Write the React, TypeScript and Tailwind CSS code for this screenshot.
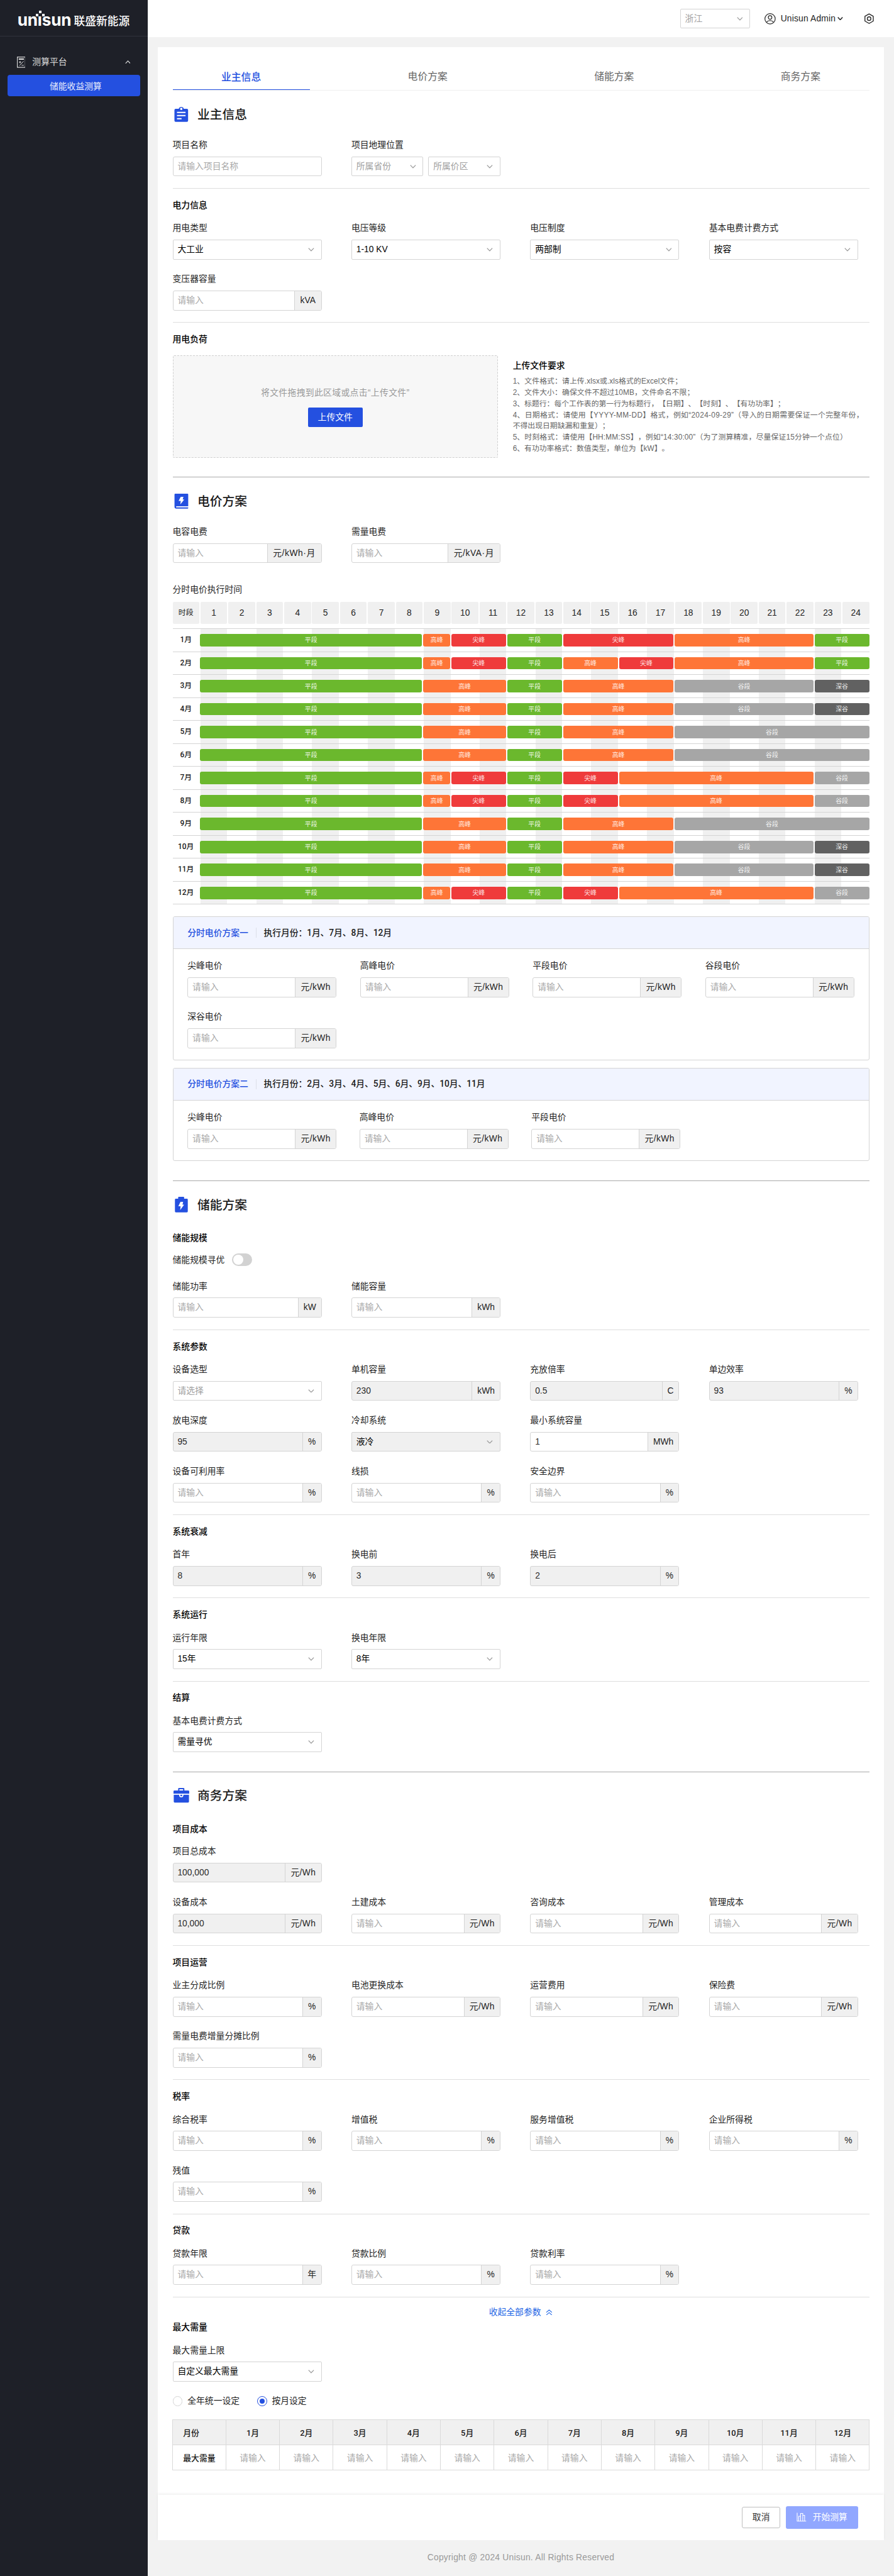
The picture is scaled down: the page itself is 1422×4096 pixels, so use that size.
import React from 'react';

type FieldSpec = {
  label: string;
  value?: string;
  placeholder?: string;
  unit?: string;
  select?: boolean;
  disabled?: boolean;
};

const UNIT_WIDTH: Record<string, string> = {
  'kVA': 'w-[43px]',
  '元/kWh·月': 'w-[87px] tracking-[0.6px]',
  '元/kVA·月': 'w-[84px] tracking-[0.6px]',
  '元/kWh': 'w-[66px] tracking-[0.4px]',
  '元/Wh': 'w-[58px] tracking-[0.4px]',
  'kW': 'w-[37px]',
  'kWh': 'w-[45px]',
  'MWh': 'w-[50px]',
  '%': 'w-[30px]',
  'C': 'w-[27px]',
  '年': 'w-[30px]',
};

function Chevron({ className = 'text-[#999]', up = false, size = 'w-[10px] h-[6px]', width = 1.3 }: { className?: string; up?: boolean; size?: string; width?: number }) {
  return (
    <svg viewBox="0 0 10 6" className={`shrink-0 ${size} ${className}`} fill="none" stroke="currentColor" strokeWidth={width}>
      <path d={up ? 'M0.8 5.4 L5 1 L9.2 5.4' : 'M0.8 0.6 L5 5 L9.2 0.6'} />
    </svg>
  );
}

function SelectBox({ value, placeholder, disabled, className = 'w-[240px]' }: { value?: string; placeholder?: string; disabled?: boolean; className?: string }) {
  return (
    <div className={`flex h-8 items-center justify-between rounded-[2px] border border-[#d4d4d4] pl-[7px] pr-[11px] ${disabled ? 'bg-[#f0f0f0]' : 'bg-white'} ${className}`}>
      <span className={value ? 'text-black' : 'text-[#a0a0a0]'}>{value ?? placeholder}</span>
      <Chevron />
    </div>
  );
}

function InputBox({ value, placeholder = '请输入', unit, disabled }: Omit<FieldSpec, 'label'>) {
  return (
    <div className={`flex h-8 w-[240px] overflow-hidden rounded-[3px] border border-[#d4d4d4] ${disabled ? 'bg-[#f0f0f0]' : 'bg-white'}`}>
      <div className={`flex flex-1 items-center pl-[7px] ${value ? 'text-[#2b2b2b]' : 'text-[#a8a8a8]'}`}>{value ?? placeholder}</div>
      {unit && (
        <div className={`flex shrink-0 items-center justify-center whitespace-nowrap border-l border-[#d4d4d4] bg-[#f0f0f0] text-[#222] ${UNIT_WIDTH[unit]}`}>{unit}</div>
      )}
    </div>
  );
}

function Field(f: FieldSpec) {
  return (
    <div className="w-[240px]">
      <div className="mb-2 h-[22px] pt-px leading-[22px] text-[#1f1f1f]">{f.label}</div>
      {f.select ? <SelectBox value={f.value} placeholder={f.placeholder} disabled={f.disabled} /> : <InputBox {...f} />}
    </div>
  );
}

function Fields({ items, className = 'mt-[15px]', gap = 'gap-x-12' }: { items: FieldSpec[]; className?: string; gap?: string }) {
  return (
    <div className={`flex flex-wrap gap-y-5 ${gap} ${className}`}>
      {items.map((f) => (
        <Field key={f.label} {...f} />
      ))}
    </div>
  );
}

const Divider = () => <div className="mt-[19px] h-px bg-[#dedede]" />;
const HeavyDivider = () => <div className="mt-[31px] h-px bg-[#a9a9a9]" />;

function SubTitle({ children, className = 'mt-[15px]' }: { children: React.ReactNode; className?: string }) {
  return <div className={`h-[22px] pt-px font-medium leading-[22px] text-black ${className}`}>{children}</div>;
}

function SectionTitle({ icon, children }: { icon: React.ReactNode; children: React.ReactNode }) {
  return (
    <div className="mt-6 flex h-7 gap-3">
      {icon}
      <h2 className="pt-px text-[20px] font-medium leading-7 text-[#1a1a1a]">{children}</h2>
    </div>
  );
}

const ClipboardIcon = () => (
  <svg viewBox="0 0 28 28" className="h-7 w-7 fill-[#2450e0]">
    <path fillRule="evenodd" d="M4.5 5h5a4.2 4.2 0 0 1 8 0h5a2 2 0 0 1 2 2v17a2 2 0 0 1-2 2h-18a2 2 0 0 1-2-2V7a2 2 0 0 1 2-2zM13.5 3.2a1.9 1.9 0 1 0 0 3.8a1.9 1.9 0 0 0 0-3.8zM6.6 10v2h13.8v-2zM6.6 15v2h13.8v-2zM6.6 20v2h7.4v-2z" />
  </svg>
);
const PriceBookIcon = () => (
  <svg viewBox="0 0 28 28" className="h-7 w-7 fill-[#2450e0]">
    <path fillRule="evenodd" d="M4 2h19.5a1.2 1.2 0 0 1 1.2 1.2V22.3H6a.9.9 0 0 0 0 1.8h18.7V25a1 1 0 0 1-1 1H5a2.4 2.4 0 0 1-2.4-2.4V3.4A1.4 1.4 0 0 1 4 2zM12.6 7h4.4l-1.2 4.4h2.5L12 19.3l.7-5.6H9.2z" />
  </svg>
);
const BatteryIcon = () => (
  <svg viewBox="0 0 28 28" className="h-7 w-7 fill-[#2450e0]">
    <path fillRule="evenodd" d="M9.5 1h7.6a1 1 0 0 1 1 1v2h4.4a1.5 1.5 0 0 1 1.5 1.5v19a1.5 1.5 0 0 1-1.5 1.5H4.8a1.5 1.5 0 0 1-1.5-1.5v-19A1.5 1.5 0 0 1 4.8 4h3.7V2a1 1 0 0 1 1-1zM12.2 9.2h4.3l-1 4.4h2.6L11.8 22.2l.6-5.9H8.8z" />
  </svg>
);
const BriefcaseIcon = () => (
  <svg viewBox="0 0 28 28" className="h-7 w-7 fill-[#2450e0]">
    <path fillRule="evenodd" d="M8.5 6V3.4A1.4 1.4 0 0 1 9.9 2h7.2a1.4 1.4 0 0 1 1.4 1.4V6h6.3a1.5 1.5 0 0 1 1.5 1.5V11.2H1V7.5A1.5 1.5 0 0 1 2.5 6zM10.5 6h6V4h-6z" />
    <path d="M1.4 13h8.7v.6a3.4 3.4 0 0 0 6.8 0V13h9v11a1.5 1.5 0 0 1-1.5 1.5H2.9A1.5 1.5 0 0 1 1.4 24z" />
    <path d="M11.9 13h3.2v.8a1.6 1.6 0 0 1-3.2 0z" />
  </svg>
);

const TONES: Record<string, [string, string]> = {
  p: ['平段', 'bg-[#6bb82d]'],
  h: ['高峰', 'bg-[#fe7537]'],
  s: ['尖峰', 'bg-[#ef3b3b]'],
  g: ['谷段', 'bg-[#a6a6a6]'],
  d: ['深谷', 'bg-[#616161]'],
};
type Seg = [string, number];
const PLAN_A: Seg[] = [['p', 8], ['h', 3], ['p', 2], ['h', 4], ['g', 5], ['d', 2]];
const PLAN_B: Seg[] = [['p', 8], ['h', 3], ['p', 2], ['h', 4], ['g', 7]];
const PLAN_C: Seg[] = [['p', 8], ['h', 1], ['s', 2], ['p', 2], ['s', 2], ['h', 7], ['g', 2]];
const MONTHS: Seg[][] = [
  [['p', 8], ['h', 1], ['s', 2], ['p', 2], ['s', 4], ['h', 5], ['p', 2]],
  [['p', 8], ['h', 1], ['s', 2], ['p', 2], ['h', 2], ['s', 2], ['h', 5], ['p', 2]],
  PLAN_A, PLAN_A, PLAN_B, PLAN_B, PLAN_C, PLAN_C, PLAN_B, PLAN_A, PLAN_A, PLAN_C,
];

function Timeline() {
  return (
    <div>
      <div className="mt-2 grid grid-cols-[repeat(25,minmax(0,1fr))] gap-x-[2px]">
        {Array.from({ length: 25 }, (_, i) => (
          <div key={i} className={`flex h-9 items-center justify-center rounded-[2px] bg-[#f0f0f0] pt-px text-[#1f1f1f] ${i === 0 ? 'text-xs' : 'text-[14px]'}`}>
            {i === 0 ? '时段' : i}
          </div>
        ))}
      </div>
      <div className="mt-[7px] border-t border-[#d4d4d4]">
        {MONTHS.map((segs, m) => (
          <div key={m} className="grid h-[37px] grid-cols-[repeat(25,minmax(0,1fr))] gap-x-[2px] border-b border-[#d4d4d4]">
            <div className="col-start-1 row-start-1 flex items-center justify-center font-[Roboto,'Noto_Sans_CJK_SC',sans-serif] text-xs font-medium text-[#1a1a1a]">{m + 1}月</div>
            <div className="col-start-2 col-end-26 row-start-1 grid grid-cols-24 gap-x-[2px]">
              {Array.from({ length: 24 }, (_, i) => (
                <div key={i} className={i % 2 === 0 ? 'bg-[#f0f0f0]' : ''} />
              ))}
            </div>
            <div className="z-10 col-start-2 col-end-26 row-start-1 -ml-px grid grid-cols-24 items-center gap-x-[2px]">
              {segs.map(([tone, span], i) => (
                <div
                  key={i}
                  className={`flex h-5 items-center justify-center rounded-[3px] pt-px text-[10px] leading-5 text-white/85 ${TONES[tone][1]}`}
                  style={{ gridColumn: `span ${span}` }}
                >
                  {TONES[tone][0]}
                </div>
              ))}
            </div>
          </div>
        ))}
      </div>
    </div>
  );
}

function PlanCard({ title, months, labels, className, gap }: { title: string; months: string; labels: string[]; className: string; gap: string }) {
  return (
    <div className={`overflow-hidden rounded-[3px] border border-[#d4d4d4] ${className}`}>
      <div className="flex h-[51px] items-center border-b border-[#d4d4d4] bg-[#f1f4ff] pl-[23px] pt-px font-medium">
        <span className="text-[#2450e0]">{title}</span>
        <span className="mx-3 h-4 w-px bg-[#dcdfe8]" />
        <span className="font-[Roboto,'Noto_Sans_CJK_SC',sans-serif] tracking-[-0.1px] text-[#1a1a1a]">{months}</span>
      </div>
      <div className="px-[23px] pb-[19px]">
        <Fields className="mt-4" gap={gap} items={labels.map((label) => ({ label, unit: '元/kWh' }))} />
      </div>
    </div>
  );
}

const RULES: [string, string][] = [
  ['1、文件格式：请上传.xlsx或.xls格式的Excel文件；', 'tracking-[0.1px]'],
  ['2、文件大小：确保文件不超过10MB，文件命名不限；', 'tracking-[0.1px]'],
  ['3、标题行：每个工作表的第一行为标题行，【日期】、【时刻】、【有功功率】；', ''],
  ['4、日期格式：请使用【YYYY-MM-DD】格式，例如“2024-09-29”（导入的日期需要保证一个完整年份，', 'tracking-[0.31px]'],
  ['不得出现日期缺漏和重复）；', ''],
  ['5、时刻格式：请使用【HH:MM:SS】，例如“14:30:00”（为了测算精准，尽量保证15分钟一个点位）', 'tracking-[0.16px]'],
  ['6、有功功率格式：数值类型，单位为【kW】。', ''],
];

function Sidebar() {
  return (
    <aside className="w-[238px] shrink-0 bg-[#1e2028] text-white">
      <div className="flex h-[59px] border-b border-[#30333c] pl-7">
        <div className="relative w-[91px] pt-[19px]">
          <span aria-label="unisun" className="block whitespace-nowrap font-[Inter,sans-serif] text-[26.5px] font-bold leading-[27px] tracking-[-0.2px]">unısun</span>
          <span className="absolute left-[34.5px] top-[17px] h-[4px] w-[4px] bg-white" />
          <span className="absolute left-[29.5px] top-[22px] h-[4px] w-[4px] bg-white" />
          <span className="absolute left-[39.5px] top-[22px] h-[4px] w-[4px] bg-white" />
        </div>
        <span className="pt-[23px] text-[18px] font-medium leading-6">联盛新能源</span>
      </div>
      <div className="mt-6 flex h-[34px] items-center pl-[27px] pr-[28px] text-[14px] text-[#dcdcdc]">
        <svg viewBox="0 0 14 18" className="h-[18px] w-[14px] shrink-0" fill="none" stroke="currentColor" strokeWidth="1">
          <rect x="0.5" y="0.7" width="13" height="16.6" strokeWidth="1.2" />
          <path d="M2.8 4h8.4" strokeWidth="2.2" />
          <path d="M3.2 9h3.6M5 7.2v3.6M10.6 7.5L4 14.6M7.4 14h3.6" />
        </svg>
        <span className="ml-[11px] flex-1">测算平台</span>
        <Chevron up className="text-[#dcdcdc]" size="w-[9px] h-[5.5px]" />
      </div>
      <div className="ml-3 mt-1 flex h-[34px] w-[214px] items-center rounded-[4px] bg-[#2450e0] pl-[68px] pt-1 text-[14px] text-white/90">储能收益测算</div>
    </aside>
  );
}

function Header() {
  return (
    <header className="flex h-[60px] items-center justify-end bg-white pr-8">
      <SelectBox placeholder="浙江" className="w-[113px]" />
      <svg viewBox="0 0 18 18" className="ml-[23px] h-[18px] w-[18px]" fill="none" stroke="#222" strokeWidth="1.2">
        <circle cx="9" cy="9" r="8.3" />
        <circle cx="9" cy="6.9" r="2.9" />
        <path d="M3.3 14.7c1.3-2 3.3-2.8 5.7-2.8s4.4.8 5.7 2.8" />
      </svg>
      <span className="ml-2 tracking-[0.2px] text-[#222]">Unisun Admin</span>
      <Chevron className="ml-[3px] text-[#222]" size="w-[9px] h-[5.5px]" width={1.7} />
      <svg viewBox="0 0 17 18" className="ml-[33px] h-[17.5px] w-[17px]" fill="none" stroke="#222" strokeWidth="1.4">
        <path d="M8.5 1.1L15.4 5v8L8.5 16.9L1.6 13V5z" strokeLinejoin="round" />
        <circle cx="8.5" cy="9" r="3" />
      </svg>
    </header>
  );
}

function DemandTable() {
  return (
    <div className="-mx-px mt-[19px] grid h-[82px] w-[1124px] grid-cols-[repeat(13,minmax(0,1fr))] grid-rows-[40px_1fr] border-l border-t border-[#dadada] font-[Roboto,'Noto_Sans_CJK_SC',sans-serif] text-[13px] font-medium text-[#1a1a1a]">
      <div className="flex items-center border-b border-r border-[#dadada] bg-[#f0f0f0] pl-[17px] pt-[3px]">月份</div>
      {Array.from({ length: 12 }, (_, i) => (
        <div key={i} className="flex items-center justify-center border-b border-r border-[#dadada] bg-[#f0f0f0] pt-[3px]">{i + 1}月</div>
      ))}
      <div className="flex items-center border-b border-r border-[#dadada] pl-[17px] pt-[2px]">最大需量</div>
      {Array.from({ length: 12 }, (_, i) => (
        <div key={i} className="flex items-center justify-center border-b border-r border-[#dadada] pt-[2px] text-[14px] font-normal text-[#a8a8a8]">请输入</div>
      ))}
    </div>
  );
}

export default function App() {
  return (
    <div className="flex h-[4147.6px] w-[1440px] overflow-hidden bg-[#f2f2f2] font-['Liberation_Sans','Noto_Sans_CJK_SC',sans-serif] text-[14px] leading-[22px] [text-spacing-trim:space-all] [zoom:0.9875]">
      <Sidebar />
      <div className="min-w-0 flex-1">
        <Header />
        <main className="ml-4 mt-4 w-[1170px] bg-white">
          <div className="h-[3941px] px-6 pt-6">
            <nav className="flex h-[46px] justify-between border-b border-[#efefef] text-[16px] text-[#666]">
              {['业主信息', '电价方案', '储能方案', '商务方案'].map((t, i) => (
                <div key={t} className={`flex h-[45px] w-[221px] items-center justify-center ${i === 0 ? 'border-b-2 border-[#2450e0] pt-[4px] font-medium text-[#2450e0]' : 'pt-[2px]'}`}>{t}</div>
              ))}
            </nav>

            <SectionTitle icon={<ClipboardIcon />}>业主信息</SectionTitle>
            <div className="mt-6 flex gap-12">
              <Field label="项目名称" placeholder="请输入项目名称" />
              <div>
                <div className="mb-2 h-[22px] pt-px text-[#1f1f1f]">项目地理位置</div>
                <div className="flex gap-2">
                  <SelectBox placeholder="所属省份" className="w-[116px]" />
                  <SelectBox placeholder="所属价区" className="w-[116px]" />
                </div>
              </div>
            </div>
            <Divider />
            <SubTitle>电力信息</SubTitle>
            <Fields
              items={[
                { label: '用电类型', value: '大工业', select: true },
                { label: '电压等级', value: '1-10 KV', select: true },
                { label: '电压制度', value: '两部制', select: true },
                { label: '基本电费计费方式', value: '按容', select: true },
                { label: '变压器容量', unit: 'kVA' },
              ]}
            />
            <Divider />
            <SubTitle>用电负荷</SubTitle>
            <div className="mt-[15px] flex h-[165px] gap-6">
              <div className="flex w-[524px] shrink-0 flex-col items-center rounded-[2px] border border-dashed border-[#d0d0d0] bg-[#f7f7f7] pt-[49px]">
                <div className="tracking-[0.35px] text-[#999]">将文件拖拽到此区域或点击“上传文件”</div>
                <div className="mt-[12px] flex h-8 w-[88px] items-center justify-center rounded-[2px] bg-[#2450e0] text-white">上传文件</div>
              </div>
              <div className="pt-[6px]">
                <div className="font-medium text-black">上传文件要求</div>
                <div className="mt-[6px] whitespace-nowrap text-xs leading-[18px] text-[#666]">
                  {RULES.map(([text, tracking]) => (
                    <div key={text} className={tracking}>{text}</div>
                  ))}
                </div>
              </div>
            </div>
            <HeavyDivider />

            <SectionTitle icon={<PriceBookIcon />}>电价方案</SectionTitle>
            <Fields className="mt-6" items={[{ label: '电容电费', unit: '元/kWh·月' }, { label: '需量电费', unit: '元/kVA·月' }]} />
            <div className="mt-8 h-[22px] text-[#1f1f1f]">分时电价执行时间</div>
            <Timeline />
            <PlanCard className="mt-[19px] h-[232px]" gap="gap-x-[38px]" title="分时电价方案一" months="执行月份：1月、7月、8月、12月" labels={['尖峰电价', '高峰电价', '平段电价', '谷段电价', '深谷电价']} />
            <PlanCard className="mt-3 h-[150px]" gap="gap-x-[37px]" title="分时电价方案二" months="执行月份：2月、3月、4月、5月、6月、9月、10月、11月" labels={['尖峰电价', '高峰电价', '平段电价']} />
            <HeavyDivider />

            <SectionTitle icon={<BatteryIcon />}>储能方案</SectionTitle>
            <SubTitle className="mt-7">储能规模</SubTitle>
            <div className="mt-[14px] flex h-[22px] items-center gap-3 text-[#1f1f1f]">
              <span className="pt-px">储能规模寻优</span>
              <span className="flex h-5 w-8 items-center rounded-full bg-[#d2d2d2] px-[2px]">
                <span className="h-4 w-4 rounded-full bg-white" />
              </span>
            </div>
            <Fields className="mt-5" items={[{ label: '储能功率', unit: 'kW' }, { label: '储能容量', unit: 'kWh' }]} />
            <Divider />
            <SubTitle>系统参数</SubTitle>
            <Fields
              items={[
                { label: '设备选型', placeholder: '请选择', select: true },
                { label: '单机容量', value: '230', unit: 'kWh', disabled: true },
                { label: '充放倍率', value: '0.5', unit: 'C', disabled: true },
                { label: '单边效率', value: '93', unit: '%', disabled: true },
              ]}
            />
            <Fields
              className="mt-5"
              items={[
                { label: '放电深度', value: '95', unit: '%', disabled: true },
                { label: '冷却系统', value: '液冷', select: true, disabled: true },
                { label: '最小系统容量', value: '1', unit: 'MWh' },
              ]}
            />
            <Fields className="mt-5" items={[{ label: '设备可利用率', unit: '%' }, { label: '线损', unit: '%' }, { label: '安全边界', unit: '%' }]} />
            <Divider />
            <SubTitle>系统衰减</SubTitle>
            <Fields
              items={[
                { label: '首年', value: '8', unit: '%', disabled: true },
                { label: '换电前', value: '3', unit: '%', disabled: true },
                { label: '换电后', value: '2', unit: '%', disabled: true },
              ]}
            />
            <Divider />
            <SubTitle>系统运行</SubTitle>
            <Fields items={[{ label: '运行年限', value: '15年', select: true }, { label: '换电年限', value: '8年', select: true }]} />
            <Divider />
            <SubTitle>结算</SubTitle>
            <Fields items={[{ label: '基本电费计费方式', value: '需量寻优', select: true }]} />
            <HeavyDivider />

            <SectionTitle icon={<BriefcaseIcon />}>商务方案</SectionTitle>
            <SubTitle className="mt-7">项目成本</SubTitle>
            <Fields className="mt-[14px]" items={[{ label: '项目总成本', value: '100,000', unit: '元/Wh', disabled: true }]} />
            <Fields
              className="mt-5"
              items={[
                { label: '设备成本', value: '10,000', unit: '元/Wh', disabled: true },
                { label: '土建成本', unit: '元/Wh' },
                { label: '咨询成本', unit: '元/Wh' },
                { label: '管理成本', unit: '元/Wh' },
              ]}
            />
            <Divider />
            <SubTitle>项目运营</SubTitle>
            <Fields
              items={[
                { label: '业主分成比例', unit: '%' },
                { label: '电池更换成本', unit: '元/Wh' },
                { label: '运营费用', unit: '元/Wh' },
                { label: '保险费', unit: '元/Wh' },
                { label: '需量电费增量分摊比例', unit: '%' },
              ]}
            />
            <Divider />
            <SubTitle>税率</SubTitle>
            <Fields
              items={[
                { label: '综合税率', unit: '%' },
                { label: '增值税', unit: '%' },
                { label: '服务增值税', unit: '%' },
                { label: '企业所得税', unit: '%' },
                { label: '残值', unit: '%' },
              ]}
            />
            <Divider />
            <SubTitle>贷款</SubTitle>
            <Fields items={[{ label: '贷款年限', unit: '年' }, { label: '贷款比例', unit: '%' }, { label: '贷款利率', unit: '%' }]} />
            <Divider />
            <div className="mt-[13px] flex h-[22px] items-center justify-center gap-2 text-[#1f66e5]">
              收起全部参数
              <svg viewBox="0 0 11 10" className="h-[10px] w-[11px]" fill="none" stroke="currentColor" strokeWidth="1.1">
                <path d="M1 5L5.5 1L10 5M1 9.2L5.5 5.2L10 9.2" />
              </svg>
            </div>
            <SubTitle className="mt-[2px]">最大需量</SubTitle>
            <Fields items={[{ label: '最大需量上限', value: '自定义最大需量', select: true }]} />
            <div className="mt-5 flex h-[22px] items-center text-[#1f1f1f]">
              <span className="mr-2 h-4 w-4 rounded-full border border-[#d4d4d4]" />
              <span className="pt-px">全年统一设定</span>
              <span className="ml-[28px] mr-2 flex h-4 w-4 items-center justify-center rounded-full border border-[#2450e0]">
                <span className="h-2 w-2 rounded-full bg-[#2450e0]" />
              </span>
              <span className="pt-px">按月设定</span>
            </div>
            <DemandTable />
          </div>
          <div className="flex h-[73px] items-center justify-end gap-[9px] pr-[42px] shadow-[0_-2px_4px_rgba(0,0,0,0.06)]">
            <div className="flex h-[34px] w-[62px] items-center justify-center rounded-[3px] border border-[#bfbfbf] text-[#333]">取消</div>
            <div className="flex h-9 w-[116px] items-center justify-center gap-[10px] rounded-[3px] bg-[#91a7ff] text-white">
              <svg viewBox="0 0 16 15" className="h-[15px] w-4" fill="none" stroke="currentColor" strokeWidth="1.1">
                <path d="M1 0.5V14M0.5 14H15.5M3.5 14V6h3v8M6.5 14V1.5h3.5V14M10 14V4.5h3V14" />
              </svg>
              开始测算
            </div>
          </div>
        </main>
        <footer className="ml-4 w-[1170px] pt-[17px] text-center tracking-[0.25px] text-[#999]">Copyright @ 2024 Unisun. All Rights Reserved</footer>
      </div>
    </div>
  );
}
